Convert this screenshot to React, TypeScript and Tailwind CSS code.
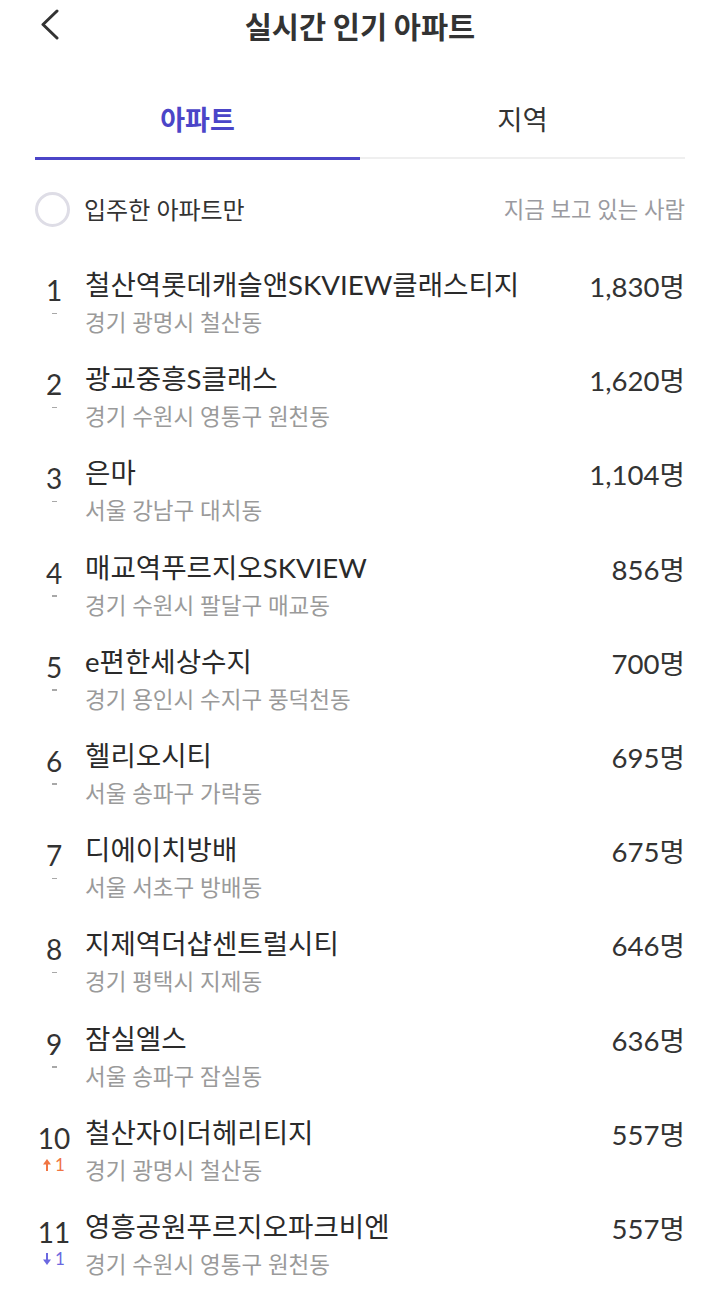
import React from "react";

type Item = { name: string; addr: string; count: string; change?: { dir: "up" | "down"; n: number } };

const items: Item[] = [
  { name: "철산역롯데캐슬앤SKVIEW클래스티지", addr: "경기 광명시 철산동", count: "1,830명" },
  { name: "광교중흥S클래스", addr: "경기 수원시 영통구 원천동", count: "1,620명" },
  { name: "은마", addr: "서울 강남구 대치동", count: "1,104명" },
  { name: "매교역푸르지오SKVIEW", addr: "경기 수원시 팔달구 매교동", count: "856명" },
  { name: "e편한세상수지", addr: "경기 용인시 수지구 풍덕천동", count: "700명" },
  { name: "헬리오시티", addr: "서울 송파구 가락동", count: "695명" },
  { name: "디에이치방배", addr: "서울 서초구 방배동", count: "675명" },
  { name: "지제역더샵센트럴시티", addr: "경기 평택시 지제동", count: "646명" },
  { name: "잠실엘스", addr: "서울 송파구 잠실동", count: "636명" },
  { name: "철산자이더헤리티지", addr: "경기 광명시 철산동", count: "557명", change: { dir: "up", n: 1 } },
  { name: "영흥공원푸르지오파크비엔", addr: "경기 수원시 영통구 원천동", count: "557명", change: { dir: "down", n: 1 } },
];

function Arrow({ dir }: { dir: "up" | "down" }) {
  return (
    <svg width="8" height="12" viewBox="0 0 8 12" className={dir === "down" ? "rotate-180" : ""}>
      <polygon points="4,0 8,5.5 0,5.5" fill="currentColor" />
      <rect x="3" y="5" width="2" height="7" fill="currentColor" />
    </svg>
  );
}

export default function App() {
  return (
    <div className="w-[720px] h-[1292px] bg-white overflow-hidden font-['Lato','Noto_Sans_CJK_KR',sans-serif] text-[#333]">
      {/* Header */}
      <div className="grid grid-cols-[1fr_auto_1fr] items-center h-[50px]">
        <div className="pl-[40px] flex items-center">
          <svg width="22" height="32" viewBox="0 0 22 32">
            <polyline points="17,2 3,15.5 17,29" fill="none" stroke="#333" strokeWidth="3" strokeLinecap="round" strokeLinejoin="round" />
          </svg>
        </div>
        <div className="text-[29.5px] leading-[38px] font-bold text-[#333] font-['Noto_Sans_CJK_KR',sans-serif]">실시간 인기 아파트</div>
        <div />
      </div>

      {/* Tabs */}
      <div className="flex mx-[35px] items-start">
        <div className="flex-1 border-b-[3px] border-[#4b45c8]">
          <div className="pt-[53px] pb-[20px] text-center text-[27px] leading-[34px] font-bold text-[#4b45c8]">아파트</div>
        </div>
        <div className="flex-1 border-b-[2px] border-[#efefef]">
          <div className="pt-[53px] pb-[20px] text-center text-[27.5px] leading-[34px] text-[#333]">지역</div>
        </div>
      </div>

      {/* Filter */}
      <div className="flex items-center justify-between mx-[35px] mt-[32px] h-[35px]">
        <div className="flex items-center">
          <div className="w-[35px] h-[35px] rounded-full border-[3px] border-[#dedde6]" />
          <span className="ml-[14px] text-[24px] leading-[32px] text-[#333]">입주한 아파트만</span>
        </div>
        <span className="text-[22.3px] leading-[30px] text-[#9a9aa0]">지금 보고 있는 사람</span>
      </div>

      {/* List */}
      <div className="mt-[40px]">
        {items.map((it, i) => (
          <div key={i} className="flex px-[35px] h-[94.2px]">
            <div className="w-[38px] flex flex-col items-center pt-[9px]">
              <div className="text-[28px] leading-[28px] text-[#333]">{i + 1}</div>
              {it.change ? (
                <div
                  className={`mt-[4px] h-[18px] flex items-center gap-[4px] text-[17px] leading-[18px] ${
                    it.change.dir === "up" ? "text-[#f07543]" : "text-[#6b68e0]"
                  }`}
                >
                  <Arrow dir={it.change.dir} />
                  <span className="block leading-[18px]">{it.change.n}</span>
                </div>
              ) : (
                <div className="mt-[8.5px] w-[5px] h-[1.5px] bg-[#a8a8a8]" />
              )}
            </div>
            <div className="ml-[12px] flex-1 min-w-0">
              <div className="text-[27.6px] leading-[36px] text-[#2a2a2a] whitespace-nowrap">{it.name}</div>
              <div className="mt-[5px] text-[22.5px] leading-[30px] text-[#9a9a9a] whitespace-nowrap">{it.addr}</div>
            </div>
            <div className="pt-[2px] text-[27.6px] leading-[36px] text-[#333] whitespace-nowrap">{it.count}</div>
          </div>
        ))}
      </div>
    </div>
  );
}
